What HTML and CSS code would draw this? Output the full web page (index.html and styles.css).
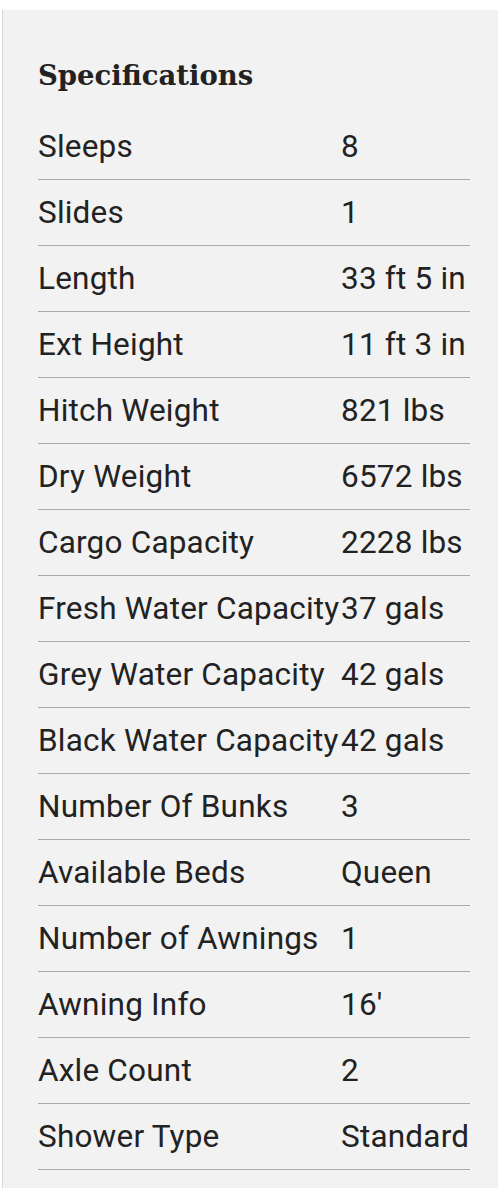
FILE: index.html
```html
<!DOCTYPE html>
<html lang="en">
<head>
    <meta charset="UTF-8">
    <meta name="viewport" content="width=device-width, initial-scale=1.0">
    <title>Specifications</title>
    <link rel="stylesheet" href="styles.css">
</head>
<body>
    <div class="specs-panel">
        <h2>Specifications</h2>
        <div class="specs-list">
            <div class="spec-row"><span>Sleeps</span><span>8</span></div>
            <div class="spec-row"><span>Slides</span><span>1</span></div>
            <div class="spec-row"><span>Length</span><span>33 ft 5 in</span></div>
            <div class="spec-row"><span>Ext Height</span><span>11 ft 3 in</span></div>
            <div class="spec-row"><span>Hitch Weight</span><span>821 lbs</span></div>
            <div class="spec-row"><span>Dry Weight</span><span>6572 lbs</span></div>
            <div class="spec-row"><span>Cargo Capacity</span><span>2228 lbs</span></div>
            <div class="spec-row"><span>Fresh Water Capacity</span><span>37 gals</span></div>
            <div class="spec-row"><span>Grey Water Capacity</span><span>42 gals</span></div>
            <div class="spec-row"><span>Black Water Capacity</span><span>42 gals</span></div>
            <div class="spec-row"><span>Number Of Bunks</span><span>3</span></div>
            <div class="spec-row"><span>Available Beds</span><span>Queen</span></div>
            <div class="spec-row"><span>Number of Awnings</span><span>1</span></div>
            <div class="spec-row"><span>Awning Info</span><span>16'</span></div>
            <div class="spec-row"><span>Axle Count</span><span>2</span></div>
            <div class="spec-row"><span>Shower Type</span><span>Standard</span></div>
        </div>
    </div>
</body>
</html>
```

FILE: styles.css
```css
body {
    margin: 0;
    padding: 0;
    background-color: #fff;
    color: #222;
    font-family: Roboto, "Liberation Sans", sans-serif;
}

.specs-panel {
    margin: 10px 0 0 2px;
    border-left: 1px solid #d6d6d6;
    background-color: #f2f2f2;
    padding: 50px 28px 30px 35px;
    min-height: 1178px;
    box-sizing: border-box;
}

.specs-panel h2 {
    margin: 0 0 24px 0;
    font-family: "DejaVu Serif", serif;
    font-weight: bold;
    font-size: 27.5px;
    line-height: 30px;
    color: #222;
}

.specs-list {
    width: 432px;
}

.spec-row {
    display: grid;
    grid-template-columns: 303px auto;
    height: 65px;
    align-items: center;
    border-bottom: 1px solid #aaa;
    font-size: 31.5px;
    letter-spacing: 0.2px;
    white-space: nowrap;
}
```
